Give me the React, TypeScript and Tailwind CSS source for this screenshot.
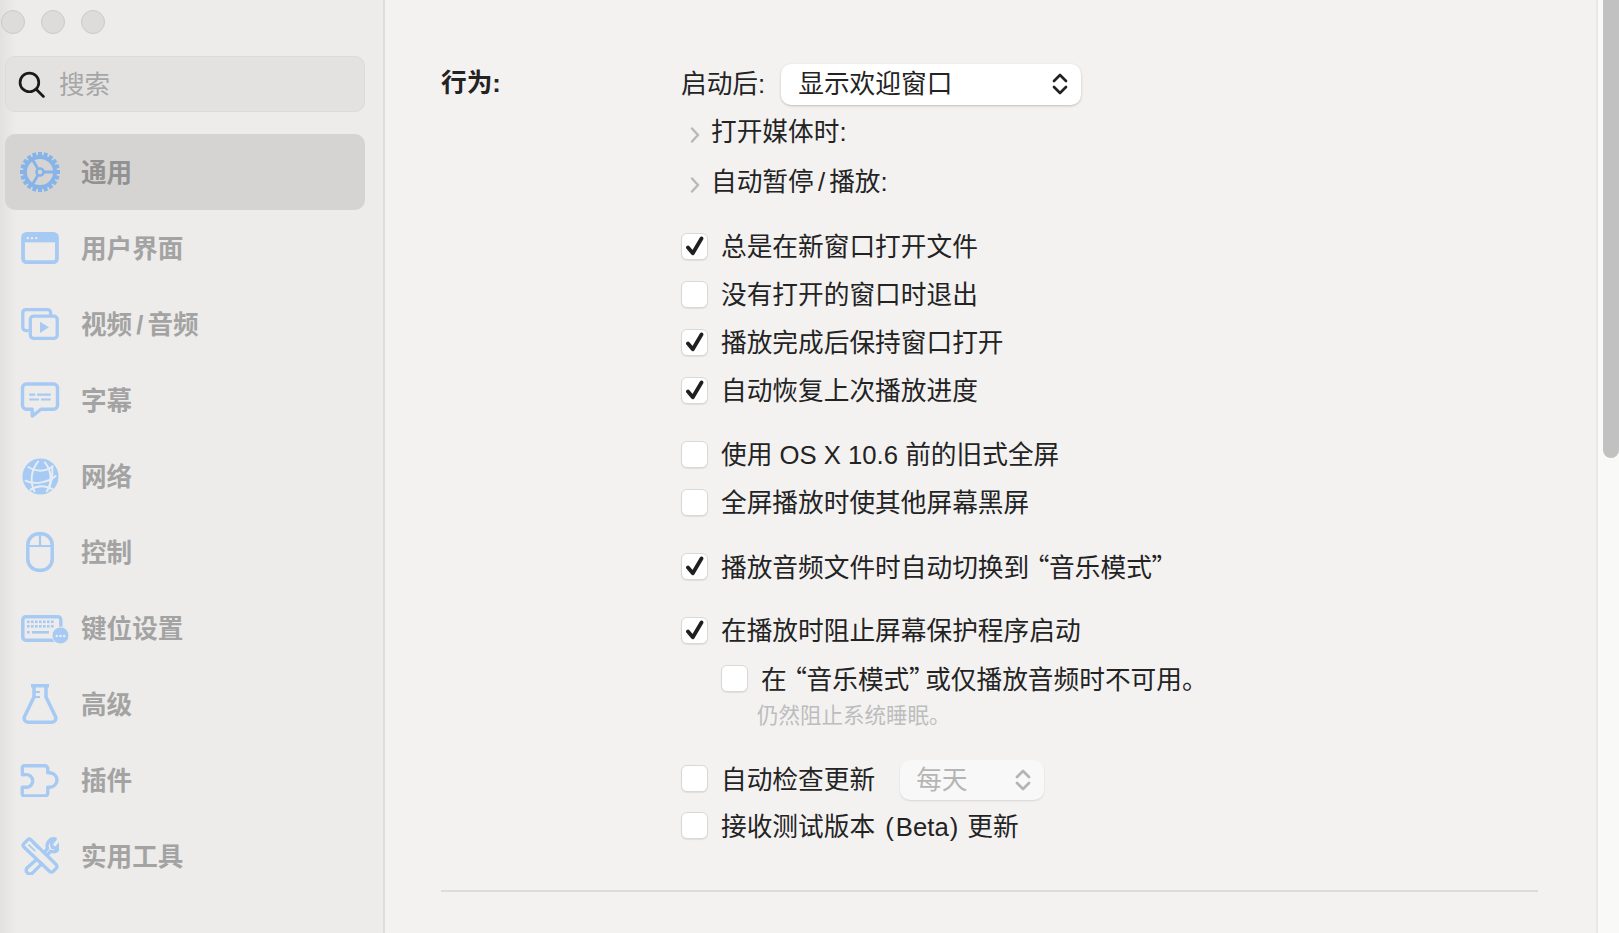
import type { ReactNode } from "react";

const font = { fontFamily: '"Liberation Sans", "Noto Sans CJK SC", sans-serif' };

function GearIcon() {
  const teeth = Array.from({ length: 20 }, (_, i) => i * 18);
  return (
    <svg viewBox="0 0 40 40" className="h-10 w-10 shrink-0 text-[#86b4e8]" fill="none" stroke="currentColor">
      {teeth.map((a) => (
        <rect key={a} x="18" y="0" width="4" height="4.500" fill="currentColor" stroke="none" transform={`rotate(${a} 20 20)`} />
      ))}
      <circle cx="20" cy="20" r="15" strokeWidth="3.800" />
      <circle cx="20" cy="20" r="3.500" strokeWidth="2.600" />
      <path d="M23.500 20H34M18 17 12.500 7.500M18 23l-5.500 9.500" strokeWidth="2.800" />
    </svg>
  );
}

function WindowIcon() {
  return (
    <svg viewBox="0 0 40 34" className="h-[32px] w-10 shrink-0 text-[#a6caf3]" fill="none">
      <rect x="2" y="2" width="36" height="30" rx="3.500" stroke="currentColor" strokeWidth="4" />
      <path d="M3 3h34v8H3z" fill="currentColor" />
      <circle cx="7" cy="6.500" r="1.300" fill="#edecea" />
      <circle cx="11.500" cy="6.500" r="1.300" fill="#edecea" />
      <circle cx="16" cy="6.500" r="1.300" fill="#edecea" />
    </svg>
  );
}

function MediaIcon() {
  return (
    <svg viewBox="0 0 40 34" className="h-[32px] w-10 shrink-0 text-[#a6caf3]" fill="none" stroke="currentColor" strokeWidth="3.500">
      <path d="M8 24H5a3.500 3.500 0 0 1-3.300-3.500V5A3.500 3.500 0 0 1 5 1.700h23A3.500 3.500 0 0 1 31.300 5v3" />
      <rect x="9.700" y="8.700" width="28.600" height="23.600" rx="3.500" />
      <path d="M20 14.500v12l9.500-6z" fill="currentColor" stroke="none" />
    </svg>
  );
}

function SubtitleIcon() {
  return (
    <svg viewBox="0 0 40 37" className="h-[36px] w-10 shrink-0 text-[#a6caf3]" fill="none" stroke="currentColor">
      <path d="M6 2h28A4 4 0 0 1 38 6v18a4 4 0 0 1-4 4H21l-9 7v-7H6a4 4 0 0 1-4-4V6a4 4 0 0 1 4-4z" strokeWidth="3.500" strokeLinejoin="round" />
      <path d="M9 13h6M17 13h14M9 18h10M21 18h10" strokeWidth="2.200" />
    </svg>
  );
}

function GlobeIcon() {
  return (
    <svg viewBox="0 0 38 38" className="h-[37px] w-[37px] shrink-0 text-[#a6caf3]" fill="none">
      <circle cx="19" cy="19" r="18.500" fill="currentColor" />
      <g stroke="#e6ecf3" strokeWidth="2">
        <path d="M6 9c5 3 9 4 13 4s9-1 13-5M3 23c5 3 11 3 17 2s11-3 15-7M8 33c6-4 12-5 18-3l6 2" />
        <path d="M17 3c-8 10-9 21-4 32M23 4c7 8 9 20 2 31M31 8c1 9-1 18-4 25" />
      </g>
    </svg>
  );
}

function MouseIcon() {
  return (
    <svg viewBox="0 0 28 40" className="h-10 w-7 shrink-0 text-[#a6caf3]" fill="none" stroke="currentColor" strokeWidth="3.500">
      <rect x="1.800" y="1.800" width="24.400" height="36.400" rx="11" />
      <path d="M2 14h24M14 2v12" strokeWidth="2.200" />
    </svg>
  );
}

function KeyboardIcon() {
  const keys = [6, 10, 14, 18, 22, 26, 30];
  return (
    <svg viewBox="0 0 48 40" className="ml-[10px] h-10 w-12 shrink-0 text-[#a6caf3]" fill="none">
      <rect x="1.800" y="8.800" width="38" height="23.400" rx="3" stroke="currentColor" strokeWidth="3.500" />
      {keys.map((x) => (
        <g key={x} fill="currentColor">
          <rect x={x} y="12.500" width="2.600" height="2.600" />
          <rect x={x} y="17" width="2.600" height="2.600" />
        </g>
      ))}
      <rect x="6" y="23" width="2.600" height="2.600" fill="currentColor" />
      <rect x="11" y="23" width="17" height="2.600" fill="currentColor" />
      <circle cx="39.500" cy="27.500" r="8.500" fill="currentColor" stroke="#edecea" strokeWidth="1" />
      <circle cx="35.800" cy="28" r="1.300" fill="#edecea" />
      <circle cx="39.500" cy="28" r="1.300" fill="#edecea" />
      <circle cx="43.200" cy="28" r="1.300" fill="#edecea" />
    </svg>
  );
}

function FlaskIcon() {
  return (
    <svg viewBox="0 0 36 40" className="h-10 w-9 shrink-0 text-[#a6caf3]" fill="none" stroke="currentColor">
      <path d="M9 1.800h18M12 2v11L2.800 32a4 4 0 0 0 3.200 6.200h24a4 4 0 0 0 3.200-6.200L24 13V2" strokeWidth="3.500" strokeLinejoin="round" />
      <path d="M13 8h5M13 13h5" strokeWidth="2.200" />
    </svg>
  );
}

function PluginIcon() {
  return (
    <svg viewBox="0 0 40 34" className="h-[33px] w-10 shrink-0 text-[#a6caf3]" fill="none" stroke="currentColor" strokeWidth="3.500">
      <path d="M4 1.800h21a3 3 0 0 1 3 3V9h2a7.500 7.500 0 0 1 0 15h-2v6a3 3 0 0 1-3 3H4a2.300 2.300 0 0 1-2.300-2.300V24H6a6.500 6.500 0 0 0 0-13H1.800V4A2.300 2.300 0 0 1 4 1.800z" strokeLinejoin="round" />
    </svg>
  );
}

function ToolsIcon() {
  return (
    <svg viewBox="0 0 40 40" className="h-[38px] w-[38px] shrink-0 text-[#a6caf3]" fill="none" stroke="currentColor" strokeWidth="3.500" strokeLinejoin="round">
      <path d="M3 7 7 3a2.500 2.500 0 0 1 3.500 0L37 29a3 3 0 0 1 0 4l-3 3a3 3 0 0 1-4 0L3 10.500A2.500 2.500 0 0 1 3 7z" />
      <path d="M16 24 6 33a4 4 0 0 0 1 5 4 4 0 0 0 5 0l11-11M24 17l4-5c-2-5 2-11 8-10l-4 5 1 4 4 1 4-5c1 6-5 10-10 8l-4 5" />
      <path d="M8 8l7 7M12 6l6 6" strokeWidth="1.800" />
    </svg>
  );
}

const navItems: { label: string; icon: ReactNode; selected?: boolean }[] = [
  { label: "通用", icon: <GearIcon />, selected: true },
  { label: "用户界面", icon: <WindowIcon /> },
  { label: "视频 / 音频", icon: <MediaIcon /> },
  { label: "字幕", icon: <SubtitleIcon /> },
  { label: "网络", icon: <GlobeIcon /> },
  { label: "控制", icon: <MouseIcon /> },
  { label: "键位设置", icon: <KeyboardIcon /> },
  { label: "高级", icon: <FlaskIcon /> },
  { label: "插件", icon: <PluginIcon /> },
  { label: "实用工具", icon: <ToolsIcon /> },
];

function Sidebar() {
  return (
    <aside className="relative flex h-full w-[385px] shrink-0 flex-col border-r-2 border-[#dfdedd] bg-[#edecea] pl-[5px] pr-[18px]">
      <div className="pointer-events-none absolute inset-y-0 left-0 w-4 bg-gradient-to-r from-[#e2e1df] to-transparent" />
      <div className="relative -ml-[4px] flex h-[56px] items-center gap-[16px] pb-[12px]">
        <span className="h-6 w-6 rounded-full border border-[#cbcaca] bg-[#dddcdb]" />
        <span className="h-6 w-6 rounded-full border border-[#cbcaca] bg-[#dddcdb]" />
        <span className="h-6 w-6 rounded-full border border-[#cbcaca] bg-[#dddcdb]" />
      </div>
      <div className="relative flex h-[56px] items-center rounded-[10px] border border-[#dcdbda] bg-[#e3e2e1] pl-[12px]">
        <svg viewBox="0 0 26 26" className="h-[27px] w-[27px] text-[#1a1a1a]" fill="none" stroke="currentColor" strokeWidth="2.600">
          <circle cx="11" cy="11" r="9" />
          <path d="m17.500 17.500 7 7" strokeLinecap="round" />
        </svg>
        <span className="ml-[14px] pt-[4px] text-[25.600px] leading-none text-[#a6a6a6]">搜索</span>
      </div>
      <nav className="relative mt-[22px] flex flex-col">
        {navItems.map((item) => (
          <div
            key={item.label}
            className={`flex h-[76px] items-center rounded-[10px] ${item.selected ? "bg-[#d5d4d3] text-[#929292]" : "text-[#a3a3a3]"}`}
          >
            <span className="flex w-[76px] justify-start pl-[15px]">
              <span className="flex w-10 justify-center">{item.icon}</span>
            </span>
            <span className="pt-[4px] text-[25.600px] font-bold leading-none [word-spacing:-3px]">{item.label}</span>
          </div>
        ))}
      </nav>
    </aside>
  );
}

function Check({ checked }: { checked?: boolean }) {
  return (
    <span className="mb-[2px] flex h-[27px] w-[27px] shrink-0 items-center justify-center rounded-[6px] border border-[#d9d8d7] bg-white shadow-[0_1px_1px_rgba(0,0,0,0.08)]">
      {checked && (
        <svg viewBox="0 0 20 20" className="h-[20px] w-[20px] text-[#1f1f1f]" fill="none" stroke="currentColor" strokeWidth="3.800" strokeLinecap="round" strokeLinejoin="round">
          <path d="m3 11.500 4.800 5.800L16.500 2.500" />
        </svg>
      )}
    </span>
  );
}

function Updown({ muted }: { muted?: boolean }) {
  return (
    <svg viewBox="0 0 16 24" className={`h-6 w-4 ${muted ? "text-[#b4b4b4]" : "text-[#222222]"}`} fill="none" stroke="currentColor" strokeWidth="2.700" strokeLinecap="round" strokeLinejoin="round">
      <path d="m2 9 6-6 6 6M2 15l6 6 6-6" />
    </svg>
  );
}

function Chevron() {
  return (
    <svg viewBox="0 0 10 16" className="mt-[6px] h-4 w-[10px] text-[#b8b8b8]" fill="none" stroke="currentColor" strokeWidth="2.400" strokeLinecap="round" strokeLinejoin="round">
      <path d="m2 1.500 6 6.500-6 6.500" />
    </svg>
  );
}

// palt gives the CJK quotes their proportional width, as in the reference
function MusicMode() {
  return (
    <span className="font-['Noto_Sans_CJK_SC']">
      <span className="ml-[7px] [font-feature-settings:'palt']">“</span>音乐模式<span className="mr-[3px] [font-feature-settings:'palt']">”</span>
    </span>
  );
}

function CheckRow({ label, checked, tight, className = "" }: { label: ReactNode; checked?: boolean; tight?: boolean; className?: string }) {
  return (
    <div className={`flex h-[48px] items-center gap-[13px] ${className}`}>
      <Check checked={checked} />
      <span className={tight ? "" : "pt-[2px]"}>{label}</span>
    </div>
  );
}

function Disclosure({ label, className = "" }: { label: string; className?: string }) {
  return (
    <div className={`flex h-[50px] items-center gap-[11px] pl-[9px] ${className}`}>
      <Chevron />
      <span className="pt-[2px] [word-spacing:-3px]">{label}</span>
    </div>
  );
}

function Settings() {
  return (
    <main className="h-full flex-1 pl-[56px] pr-[58px] pt-[59px] text-[25.700px] leading-none text-[#232323]">
      <div className="flex">
        <div className="w-[240px] shrink-0 pt-[12px] font-bold">行为:</div>
        <div className="flex flex-col">
          <div className="flex h-[50px] items-center">
            <span className="pt-[2px]">启动后:</span>
            <div className="ml-[16px] flex h-[41px] w-[300px] items-center justify-between rounded-[10px] bg-white pl-[17px] pr-[13px] shadow-[0_1px_2.500px_rgba(0,0,0,0.22)]">
              <span className="pt-[2px]">显示欢迎窗口</span>
              <Updown />
            </div>
          </div>
          <Disclosure label="打开媒体时:" className="-mt-[2px]" />
          <Disclosure label="自动暂停 / 播放:" />
          <CheckRow label="总是在新窗口打开文件" checked className="mt-[16px]" />
          <CheckRow label="没有打开的窗口时退出" />
          <CheckRow label="播放完成后保持窗口打开" checked />
          <CheckRow label="自动恢复上次播放进度" checked />
          <CheckRow label="使用 OS X 10.6 前的旧式全屏" className="mt-[16px]" />
          <CheckRow label="全屏播放时使其他屏幕黑屏" />
          <CheckRow label={<>播放音频文件时自动切换到<MusicMode /></>} checked tight className="mt-[16px]" />
          <CheckRow label="在播放时阻止屏幕保护程序启动" checked className="mt-[16px]" />
          <CheckRow label={<>在<MusicMode />或仅播放音频时不可用。</>} tight className="ml-[40px]" />
          <p className="ml-[76px] mt-[3px] text-[21.500px] text-[#bdbdbd]">仍然阻止系统睡眠。</p>
          <div className="mt-[28px] flex h-[48px] items-center">
            <Check />
            <span className="ml-[13px] pt-[2px]">自动检查更新</span>
            <div className="ml-[25px] flex h-[40px] w-[144px] items-center justify-between rounded-[10px] bg-[#f9f8f8] pl-[16px] pr-[13px] text-[#b5b5b5] shadow-[0_1px_2px_rgba(0,0,0,0.12)]">
              <span className="pt-[2px]">每天</span>
              <Updown muted />
            </div>
          </div>
          <CheckRow
            className="-mt-[1px]"
            label={<>接收测试版本 <span className="ml-[3px] mr-[2px]">(</span>Beta<span className="ml-[1px] mr-[2px]">)</span> 更新</>}
          />
        </div>
      </div>
      <hr className="mt-[39px] border-t-2 border-[#dddcdb]" />
    </main>
  );
}

export default function App() {
  return (
    <div className="flex h-screen w-full overflow-hidden bg-[#f3f2f1]" style={font}>
      <Sidebar />
      <Settings />
      <div className="h-full w-[23px] shrink-0 border-l-2 border-[#e8e7e6] bg-[#f9f9f8] pl-[5px]">
        <div className="h-[458px] w-full rounded-b-full rounded-t-[8px] bg-[#c1c1c1]" />
      </div>
    </div>
  );
}
